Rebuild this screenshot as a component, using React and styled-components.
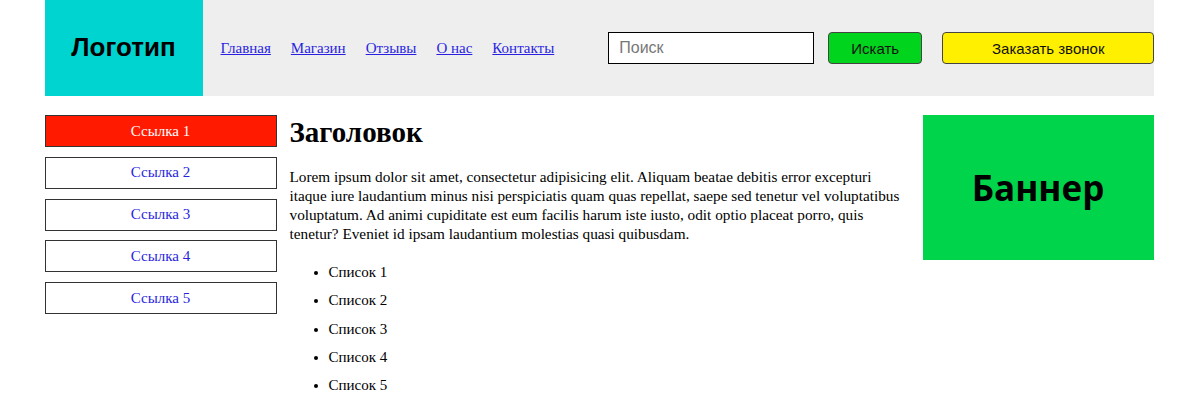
import React from "react";
import styled, { createGlobalStyle } from "styled-components";

const Global = createGlobalStyle`
  html, body { margin: 0; padding: 0; background: #fff; }
  body { font-family: "Liberation Serif", "Times New Roman", serif; color: #000; }
`;

const Page = styled.div`
  width: 1109px;
  margin: 0 auto;
`;

const Header = styled.header`
  height: 96px;
  background: #eeeeee;
  display: flex;
  align-items: center;
`;

const Logo = styled.div`
  flex: 0 0 158px;
  height: 100%;
  background: #00d4d0;
  display: flex;
  align-items: center;
  justify-content: center;
  padding-bottom: 2px;
  box-sizing: border-box;
  font-family: "Liberation Sans", Arial, sans-serif;
  font-weight: 700;
  font-size: 26px;
  color: #000;
`;

const Nav = styled.nav`
  display: flex;
  flex-shrink: 0;
  gap: 20px;
  margin-left: 18px;
  font-size: 15px;
  white-space: nowrap;
`;

const NavLink = styled.a`
  color: #2a1fe0;
  text-decoration: underline;
`;

const Search = styled.input`
  flex-shrink: 0;
  margin-left: 54px;
  width: 206px;
  height: 32px;
  box-sizing: border-box;
  border: 1px solid #000;
  padding: 0 10px;
  font-family: "Liberation Sans", Arial, sans-serif;
  font-size: 16px;
  background: #fff;
  outline: none;
  &::placeholder { color: #777; }
`;

const Button = styled.button`
  flex-shrink: 0;
  height: 32px;
  box-sizing: border-box;
  border: 1px solid #444;
  border-radius: 4px;
  background: ${(p) => p.$bg};
  width: ${(p) => p.$w}px;
  margin-left: ${(p) => p.$ml}px;
  font-family: "Liberation Sans", Arial, sans-serif;
  font-size: 15px;
  color: #111;
  padding: 0;
`;

const Body = styled.div`
  display: grid;
  grid-template-columns: 232px 620px 231px;
  column-gap: 13px;
  margin-top: 19px;
  align-items: start;
`;

const Sidebar = styled.div`
  display: flex;
  flex-direction: column;
  gap: 9.8px;
`;

const SideLink = styled.a`
  height: 32px;
  box-sizing: border-box;
  border: 1px solid #333;
  display: flex;
  align-items: center;
  justify-content: center;
  font-size: 15px;
  text-decoration: none;
  background: ${(p) => (p.$active ? "#ff1a00" : "#fff")};
  color: ${(p) => (p.$active ? "#fff" : "#2a1fe0")};
`;

const Main = styled.main``;

const Title = styled.h1`
  margin: 0;
  font-size: 29px;
  line-height: 34px;
  font-weight: 700;
`;

const Para = styled.p`
  margin: 18px 0 0;
  font-size: 15.25px;
  line-height: 19px;
`;

const List = styled.ul`
  margin: 20px 0 0;
  padding-left: 39px;
  font-size: 15px;
  line-height: 19px;
`;

const Item = styled.li`
  & + & { margin-top: 9.3px; }
`;

const Banner = styled.div`
  height: 145px;
  background: #00d44a;
  display: flex;
  align-items: center;
  justify-content: center;
  font-family: "Open Sans", sans-serif;
  font-weight: 700;
  font-size: 35px;
  color: #000;
`;

export default function App() {
  const nav = ["Главная", "Магазин", "Отзывы", "О нас", "Контакты"];
  return (
    <>
      <Global />
      <Page>
        <Header>
          <Logo>Логотип</Logo>
          <Nav>
            {nav.map((n) => (
              <NavLink key={n} href="#">{n}</NavLink>
            ))}
          </Nav>
          <Search placeholder="Поиск" />
          <Button $bg="#00d41c" $w={94} $ml={14}>Искать</Button>
          <Button $bg="#fff000" $w={212} $ml={20}>Заказать звонок</Button>
        </Header>
        <Body>
          <Sidebar>
            {[1, 2, 3, 4, 5].map((i) => (
              <SideLink key={i} href="#" $active={i === 1}>Ссылка {i}</SideLink>
            ))}
          </Sidebar>
          <Main>
            <Title>Заголовок</Title>
            <Para>
              Lorem ipsum dolor sit amet, consectetur adipisicing elit. Aliquam beatae debitis error excepturi itaque iure laudantium minus nisi perspiciatis quam quas repellat, saepe sed tenetur vel voluptatibus voluptatum. Ad animi cupiditate est eum facilis harum iste iusto, odit optio placeat porro, quis tenetur? Eveniet id ipsam laudantium molestias quasi quibusdam.
            </Para>
            <List>
              {[1, 2, 3, 4, 5].map((i) => (
                <Item key={i}>Список {i}</Item>
              ))}
            </List>
          </Main>
          <Banner>Баннер</Banner>
        </Body>
      </Page>
    </>
  );
}
